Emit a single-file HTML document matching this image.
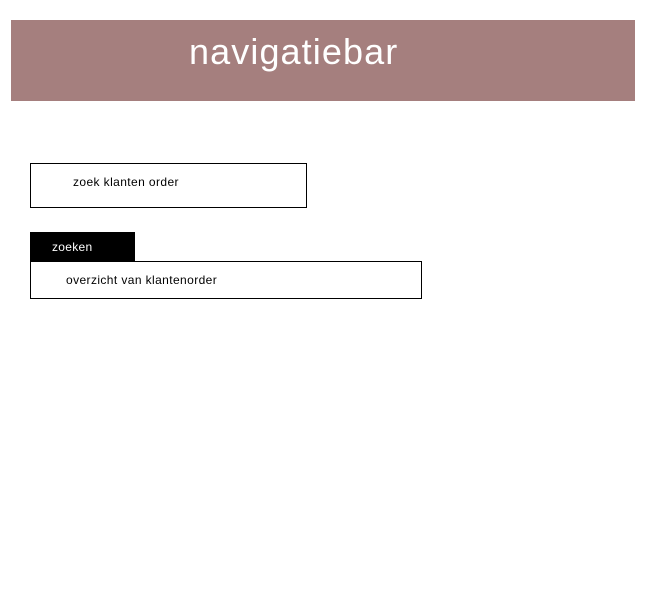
<!DOCTYPE html>
<html><head><style>
body{margin:0;width:655px;height:597px;background:#fff;position:relative;font-family:"Liberation Sans",sans-serif;overflow:hidden}
.nav{position:absolute;left:11px;top:20px;width:624px;height:81px;background:#a57f7e}
.nav span{position:absolute;left:178px;top:11px;font-size:36px;color:#fff;letter-spacing:1.1px}
.box{position:absolute;border:1px solid #000;box-sizing:border-box;font-size:12px;color:#000;letter-spacing:0.4px}
.btn{position:absolute;left:30px;top:232px;width:105px;height:29px;background:#000;color:#fff;font-size:12px;letter-spacing:0.3px}
</style></head><body>
<div class="nav"><span>navigatiebar</span></div>
<div class="box" style="left:30px;top:163px;width:277px;height:45px"><span style="position:absolute;left:42px;top:11px">zoek klanten order</span></div>
<div class="btn"><span style="position:absolute;left:22px;top:8px">zoeken</span></div>
<div class="box" style="left:30px;top:261px;width:392px;height:38px"><span style="position:absolute;left:35px;top:11px">overzicht van klantenorder</span></div>
</body></html>
